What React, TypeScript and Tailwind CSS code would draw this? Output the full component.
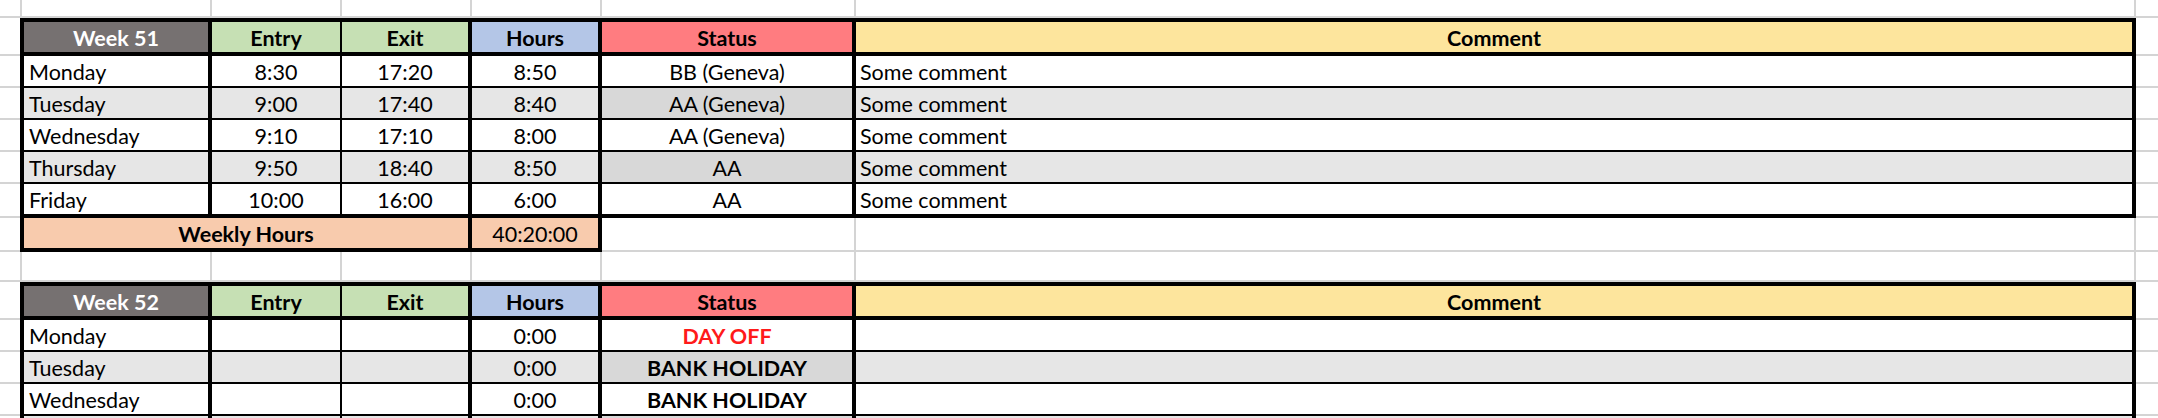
const GRID = "border-[#d4d4d4]";

type Day = {
  day: string;
  entry: string;
  exit: string;
  hours: string;
  status: string;
  comment: string;
  tone?: "off" | "holiday";
};

const week51: Day[] = [
  { day: "Monday", entry: "8:30", exit: "17:20", hours: "8:50", status: "BB (Geneva)", comment: "Some comment" },
  { day: "Tuesday", entry: "9:00", exit: "17:40", hours: "8:40", status: "AA (Geneva)", comment: "Some comment" },
  { day: "Wednesday", entry: "9:10", exit: "17:10", hours: "8:00", status: "AA (Geneva)", comment: "Some comment" },
  { day: "Thursday", entry: "9:50", exit: "18:40", hours: "8:50", status: "AA", comment: "Some comment" },
  { day: "Friday", entry: "10:00", exit: "16:00", hours: "6:00", status: "AA", comment: "Some comment" },
];

// the fourth row is only a sliver at the bottom edge of the screen
const week52: Day[] = [
  { day: "Monday", entry: "", exit: "", hours: "0:00", status: "DAY OFF", comment: "", tone: "off" },
  { day: "Tuesday", entry: "", exit: "", hours: "0:00", status: "BANK HOLIDAY", comment: "", tone: "holiday" },
  { day: "Wednesday", entry: "", exit: "", hours: "0:00", status: "BANK HOLIDAY", comment: "", tone: "holiday" },
  { day: "", entry: "", exit: "", hours: "", status: "", comment: "" },
];

const SheetRow = ({
  h,
  children,
}: {
  h: string;
  children: React.ReactNode;
}) => (
  <div className={`flex shrink-0 ${h}`}>
    <div className={`w-[20px] shrink-0 border-b-2 ${GRID}`} />
    {children}
    <div className={`flex-1 border-b-2 ${GRID}`} />
  </div>
);

// plain spreadsheet row without a table in it
const EmptyRow = ({ h }: { h: string }) => (
  <div className={`flex shrink-0 ${h}`}>
    <div className={`w-[22px] shrink-0 border-b-2 border-r-2 ${GRID}`} />
    <div className={`w-[190px] shrink-0 border-b-2 border-r-2 ${GRID}`} />
    <div className={`w-[130px] shrink-0 border-b-2 border-r-2 ${GRID}`} />
    <div className={`w-[130px] shrink-0 border-b-2 border-r-2 ${GRID}`} />
    <div className={`w-[130px] shrink-0 border-b-2 border-r-2 ${GRID}`} />
    <div className={`w-[254px] shrink-0 border-b-2 border-r-2 ${GRID}`} />
    <div className={`w-[1280px] shrink-0 border-b-2 border-r-2 ${GRID}`} />
    <div className={`flex-1 border-b-2 ${GRID}`} />
  </div>
);

const HeaderRow = ({ week }: { week: string }) => (
  <SheetRow h="h-[38px]">
    <div className="w-[192px] shrink-0 flex items-center justify-center border-4 border-black bg-[#767171] pt-[3px] text-white font-bold">
      {week}
    </div>
    <div className="w-[130px] shrink-0 flex items-center justify-center border-y-4 border-r-2 border-black bg-[#c6e0b4] pt-[3px] font-bold">
      Entry
    </div>
    <div className="w-[130px] shrink-0 flex items-center justify-center border-y-4 border-r-4 border-black bg-[#c6e0b4] pt-[3px] font-bold">
      Exit
    </div>
    <div className="w-[130px] shrink-0 flex items-center justify-center border-y-4 border-r-4 border-black bg-[#b4c6e7] pt-[3px] font-bold">
      Hours
    </div>
    <div className="w-[254px] shrink-0 flex items-center justify-center border-y-4 border-r-4 border-black bg-[#ff7c80] pt-[3px] font-bold">
      Status
    </div>
    <div className="w-[1280px] shrink-0 flex items-center justify-center border-y-4 border-r-4 border-black bg-[#fde59d] pt-[3px] font-bold">
      Comment
    </div>
  </SheetRow>
);

const DayRow = ({ d, gray, last }: { d: Day; gray: boolean; last: boolean }) => {
  const bottom = last ? "border-b-4 h-[34px]" : "border-b-2 h-[32px]";
  const bg = gray ? "bg-[#e6e6e6]" : "bg-white";
  const statusBg = gray ? "bg-[#d8d8d8]" : "bg-white";
  const statusText =
    d.tone === "off"
      ? "font-bold text-[#ff1a1a]"
      : d.tone === "holiday"
        ? "font-bold text-black"
        : "text-black";
  return (
    <div className={`flex shrink-0 ${last ? "h-[34px]" : "h-[32px]"}`}>
      <div className={`w-[20px] shrink-0 border-b-2 ${GRID}`} />
      <div className={`w-[192px] shrink-0 flex items-center border-x-4 border-black pl-[5px] pt-[3px] ${bottom} ${bg}`}>
        {d.day}
      </div>
      <div className={`w-[130px] shrink-0 flex items-center justify-center border-r-2 border-black pt-[3px] ${bottom} ${bg}`}>
        {d.entry}
      </div>
      <div className={`w-[130px] shrink-0 flex items-center justify-center border-r-4 border-black pt-[3px] ${bottom} ${bg}`}>
        {d.exit}
      </div>
      <div className={`w-[130px] shrink-0 flex items-center justify-center border-r-4 border-black pt-[3px] ${bottom} ${bg}`}>
        {d.hours}
      </div>
      <div className={`w-[254px] shrink-0 flex items-center justify-center border-r-4 border-black pt-[3px] ${bottom} ${statusBg} ${statusText}`}>
        {d.status}
      </div>
      <div className={`w-[1280px] shrink-0 flex items-center border-r-4 border-black pl-[4px] pt-[3px] ${bottom} ${bg}`}>
        {d.comment}
      </div>
      <div className={`flex-1 border-b-2 ${GRID}`} />
    </div>
  );
};

const WeeklyTotal = ({ total }: { total: string }) => (
  <SheetRow h="h-[34px]">
    <div className="w-[452px] shrink-0 flex items-center justify-center border-x-4 border-b-4 border-black bg-[#f8cbad] pt-[3px] font-bold">
      Weekly Hours
    </div>
    <div className="w-[130px] shrink-0 flex items-center justify-center border-r-4 border-b-4 border-black bg-[#f8cbad] pt-[3px]">
      {total}
    </div>
    <div className={`w-[254px] shrink-0 border-r-2 border-b-2 ${GRID}`} />
    <div className={`w-[1280px] shrink-0 border-r-2 border-b-2 ${GRID}`} />
  </SheetRow>
);

const WeekTable = ({
  week,
  days,
  total,
}: {
  week: string;
  days: Day[];
  total?: string;
}) => (
  <>
    <HeaderRow week={week} />
    {days.map((d, i) => (
      <DayRow key={i} d={d} gray={i % 2 === 1} last={i === days.length - 1} />
    ))}
    {total && <WeeklyTotal total={total} />}
  </>
);

export default function App() {
  return (
    <div className="w-[2158px] h-[418px] overflow-hidden bg-white flex flex-col font-[Lato,sans-serif] text-[21.5px] leading-none text-black">
      <EmptyRow h="h-[18px]" />
      <WeekTable week="Week 51" days={week51} total="40:20:00" />
      <EmptyRow h="h-[30px]" />
      <WeekTable week="Week 52" days={week52} />
    </div>
  );
}
